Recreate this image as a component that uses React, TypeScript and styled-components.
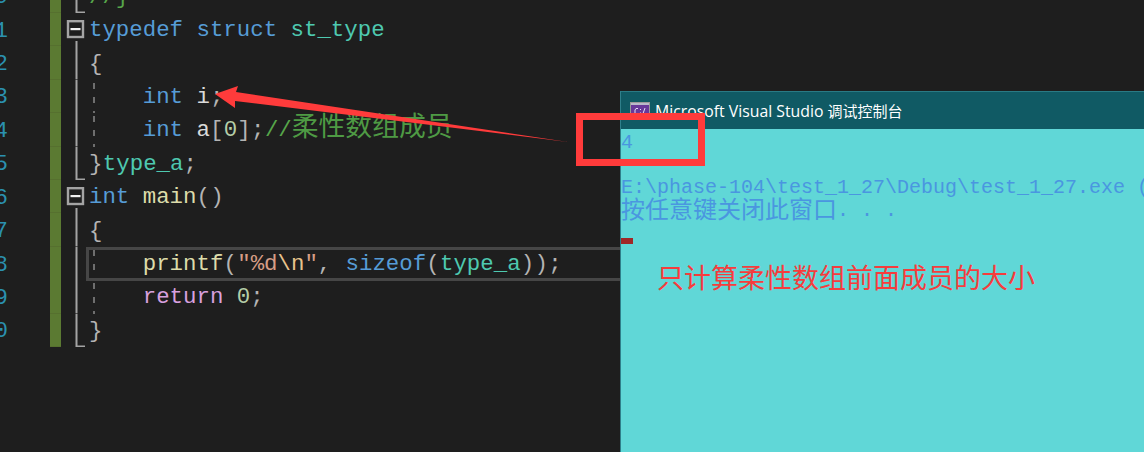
import styled, { createGlobalStyle } from 'styled-components';

const GlobalStyle = createGlobalStyle`
  html, body {
    margin: 0;
    width: 1144px;
    height: 452px;
    overflow: hidden;
    background: #1e1e1e;
  }
`;

const MONO = `"Liberation Mono", "Noto Sans CJK SC", monospace`;

const tokenColors: Record<string, string> = {
  kw: '#569cd6',
  type: '#4ec9b0',
  fn: '#dcdcaa',
  ctl: '#d8a0df',
  str: '#d69d85',
  esc: '#e8c48c',
  num: '#b5cea8',
  id: '#dadada',
  pun: '#b4b4b4',
  cmt: '#57a64a',
};

type Token = [string, string];
type Line = {
  digit: string;
  fold: 'open' | 'line' | 'end';
  guide?: boolean;
  current?: boolean;
  tokens: Token[];
};

const lines: Line[] = [
  { digit: '0', fold: 'end', tokens: [['//}', 'cmt']] },
  { digit: '1', fold: 'open', tokens: [['typedef', 'kw'], [' ', 'id'], ['struct', 'kw'], [' ', 'id'], ['st_type', 'type']] },
  { digit: '2', fold: 'line', tokens: [['{', 'pun']] },
  { digit: '3', fold: 'line', guide: true, tokens: [['    ', 'id'], ['int', 'kw'], [' ', 'id'], ['i', 'id'], [';', 'pun']] },
  { digit: '4', fold: 'line', guide: true, tokens: [['    ', 'id'], ['int', 'kw'], [' ', 'id'], ['a', 'id'], ['[', 'pun'], ['0', 'num'], ['];', 'pun'], ['//', 'cmt'], ['柔性数组成员', 'cjk']] },
  { digit: '5', fold: 'end', tokens: [['}', 'pun'], ['type_a', 'type'], [';', 'pun']] },
  { digit: '6', fold: 'open', tokens: [['int', 'kw'], [' ', 'id'], ['main', 'fn'], ['()', 'pun']] },
  { digit: '7', fold: 'line', tokens: [['{', 'pun']] },
  {
    digit: '8',
    fold: 'line',
    guide: true,
    current: true,
    tokens: [
      ['    ', 'id'], ['printf', 'fn'], ['(', 'pun'], ['"%d', 'str'], ['\\n', 'esc'], ['"', 'str'], [', ', 'pun'],
      ['sizeof', 'kw'], ['(', 'pun'], ['type_a', 'type'], ['));', 'pun'],
    ],
  },
  { digit: '9', fold: 'line', guide: true, tokens: [['    ', 'id'], ['return', 'ctl'], [' ', 'id'], ['0', 'num'], [';', 'pun']] },
  { digit: '0', fold: 'end', tokens: [['}', 'pun']] },
];

const Page = styled.div`
  position: relative;
  width: 1144px;
  height: 452px;
  overflow: hidden;
  background: #1e1e1e;
`;

const Editor = styled.div`
  display: flex;
  flex-direction: column;
  margin-top: -20.4px;
  font-family: ${MONO};
  font-size: 22.4px;
`;

const Row = styled.div`
  display: grid;
  grid-template-columns: 8px 42px 11px 5px 20px 1fr;
  height: 33.4px;
  align-items: stretch;
`;

const LineNumber = styled.div`
  grid-column: 1;
  display: flex;
  justify-content: flex-end;
  align-items: center;
  padding-top: 2px;
  box-sizing: border-box;
  color: #2b91af;
`;

const ChangeBar = styled.div`
  grid-column: 3;
  background: #5b7a32;
  border-bottom: 1px solid #56702f;
  box-sizing: border-box;
`;

const FoldCell = styled.svg`
  grid-column: 5;
  display: block;
  width: 20px;
  height: 33.4px;
`;

const Code = styled.div<{ $guide?: boolean; $current?: boolean }>`
  grid-column: 6;
  display: flex;
  align-items: center;
  box-sizing: border-box;
  padding-left: ${(p) => (p.$current ? '0' : '3px')};
  padding-top: ${(p) => (p.$current ? '1px' : '2px')};
  line-height: 27px;
  white-space: pre;
  border: ${(p) => (p.$current ? '3px solid #464646' : 'none')};
  background-origin: border-box;
  background-repeat: no-repeat;
  background-position: 7px 3px;
  background-size: 2px 100%;
  background-image: ${(p) =>
    p.$guide
      ? 'repeating-linear-gradient(to bottom, #6e6e6e 0 6px, transparent 6px 14px)'
      : 'none'};
`;

const Tok = styled.span<{ $kind: string }>`
  color: ${(p) => (p.$kind === 'cjk' ? '#4e9a44' : tokenColors[p.$kind])};
  font-size: ${(p) => (p.$kind === 'cjk' ? '26.8px' : 'inherit')};
  line-height: ${(p) => (p.$kind === 'cjk' ? '0' : 'inherit')};
  letter-spacing: ${(p) => (p.$kind === 'pun' ? '0.4px' : '0')};
`;

const ConsoleWindow = styled.div`
  position: absolute;
  left: 620px;
  top: 91px;
  width: 524px;
  height: 361px;
  display: flex;
  flex-direction: column;
  box-sizing: border-box;
  border-left: 1px solid #2f7f8a;
  background: #60d7d7;
`;

const TitleBar = styled.div`
  display: flex;
  align-items: center;
  gap: 5px;
  height: 38px;
  flex: none;
  box-sizing: border-box;
  padding-left: 9px;
  background: #105a64;
  border-top: 1px solid #2a7a84;
  color: #ffffff;
  font-family: "Open Sans", "Noto Sans CJK SC", sans-serif;
  font-size: 15.8px;
  white-space: pre;
`;

const TitleCjk = styled.span`
  font-size: 15px;
`;

const ConsoleBody = styled.div`
  flex: 1;
  overflow: hidden;
  padding-top: 3px;
  color: #4a96e0;
  font-family: ${MONO};
  font-size: 20px;
`;

const ConsoleLine = styled.div`
  height: 22.7px;
  line-height: 22.7px;
  white-space: pre;
`;

const ConsoleCjk = styled.span`
  font-size: 24px;
  line-height: 0;
  vertical-align: -1.5px;
`;

const Cursor = styled.div`
  width: 12px;
  height: 6px;
  margin-top: -7px;
  background: #a02828;
`;

const Callout = styled.div`
  position: absolute;
  left: 657px;
  top: 257px;
  color: #f63c3c;
  font-family: "Noto Sans CJK SC", sans-serif;
  font-size: 27px;
  line-height: 40px;
  white-space: nowrap;
`;

const RedBox = styled.div`
  position: absolute;
  left: 576px;
  top: 113px;
  width: 129px;
  height: 53px;
  box-sizing: border-box;
  border: 7px solid #ff3b3b;
`;

const ArrowSvg = styled.svg`
  position: absolute;
  left: 0;
  top: 0;
  width: 1144px;
  height: 452px;
  pointer-events: none;
`;

function FoldMark({ kind }: { kind: Line['fold'] }) {
  return (
    <FoldCell viewBox="0 0 20 33.4">
      {kind === 'open' && (
        <>
          <rect x="2" y="8.2" width="15" height="15.8" fill="#1e1e1e" stroke="#a4a4a4" strokeWidth="2.4" />
          <rect x="4.5" y="15" width="10" height="2.2" fill="#f0f0f0" />
          <rect x="9.5" y="28" width="2" height="5.4" fill="#a4a4a4" />
        </>
      )}
      {kind === 'line' && <rect x="9.5" y="0" width="2" height="33.4" fill="#a4a4a4" />}
      {kind === 'end' && <path d="M10.5 0V32.4H19" fill="none" stroke="#a4a4a4" strokeWidth="2" />}
    </FoldCell>
  );
}

function ConsoleIcon() {
  return (
    <svg width="20" height="17" viewBox="0 0 20 17">
      <rect x="0.5" y="0.5" width="19" height="16" fill="#68389a" stroke="#9a9a9a" />
      <rect x="1" y="1" width="18" height="2" fill="#b9b9c9" />
      <path d="M8 6.5H6L5 8v3l1 1.5h2M10.5 7v1M10.5 10.5v1M15 6l-2.5 7" fill="none" stroke="#e4dcf2" strokeWidth="1" />
    </svg>
  );
}

export default function App() {
  return (
    <Page>
      <GlobalStyle />
      <Editor>
        {lines.map((line, i) => (
          <Row key={i}>
            <LineNumber>{line.digit}</LineNumber>
            <ChangeBar />
            <FoldMark kind={line.fold} />
            <Code $guide={line.guide} $current={line.current}>
              <span>
                {line.tokens.map(([text, kind], j) => (
                  <Tok key={j} $kind={kind}>
                    {text}
                  </Tok>
                ))}
              </span>
            </Code>
          </Row>
        ))}
      </Editor>

      <ConsoleWindow>
        <TitleBar>
          <ConsoleIcon />
          <span>
            Microsoft Visual Studio <TitleCjk>调试控制台</TitleCjk>
          </span>
        </TitleBar>
        <ConsoleBody>
          <ConsoleLine>4</ConsoleLine>
          <ConsoleLine> </ConsoleLine>
          <ConsoleLine>{'E:\\phase-104\\test_1_27\\Debug\\test_1_27.exe ('}</ConsoleLine>
          <ConsoleLine>
            <ConsoleCjk>按任意键关闭此窗口</ConsoleCjk>. . .
          </ConsoleLine>
          <ConsoleLine> </ConsoleLine>
          <Cursor />
        </ConsoleBody>
      </ConsoleWindow>

      <Callout>只计算柔性数组前面成员的大小</Callout>
      <RedBox />
      <ArrowSvg viewBox="0 0 1144 452">
        <polygon points="215,94 238,86 236,92 568,142 235,101 235,108" fill="#ff3b3b" />
      </ArrowSvg>
    </Page>
  );
}
